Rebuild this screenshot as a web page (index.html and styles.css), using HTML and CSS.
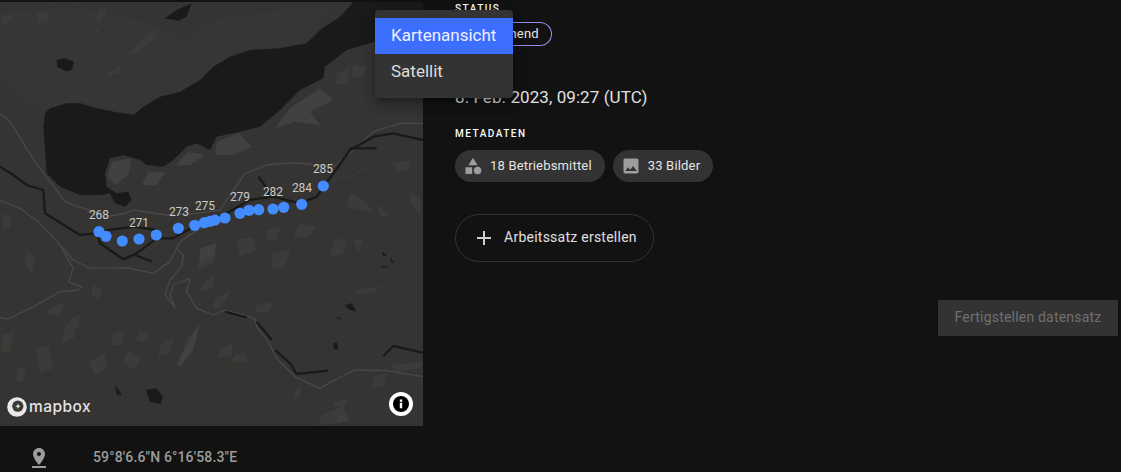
FILE: index.html
```html
<!DOCTYPE html>
<html lang="de">
<head>
<meta charset="utf-8">
<title>Datensatz</title>
<link rel="stylesheet" href="styles.css">
</head>
<body>
<div class="app">
  <section class="left">
    <div class="map">
      <svg class="map-svg" viewBox="0 6 1269 1272" width="423" height="424" xmlns="http://www.w3.org/2000/svg">
        <rect class="land" x="0" y="0" width="1269" height="1290"/>
        <path class="shade" d="M0 40L200 20L420 60L560 120L640 60L900 20L1000 20L920 130L700 160L560 270L400 345L240 305L130 330L60 300L0 230Z"/>
        <g class="patch">
          <path d="M285 70L300 25L320 30L305 60Z"/><path d="M110 40L150 35L140 65L115 70Z"/><path d="M470 90L430 110L385 165L410 160L465 115Z"/>
          <path d="M320 220L360 195L365 215L330 228Z"/><path d="M0 55L30 40L35 60L10 75Z"/>
          <path d="M280 90L300 85L295 100Z"/><path d="M1010 220L1050 205L1040 250L1005 255Z"/><path d="M1060 195L1100 200L1080 235L1055 230Z"/>
          <path d="M1180 490L1230 480L1225 510L1195 515Z"/>
          <path d="M1050 580L1090 600L1120 640L1080 630L1040 620Z"/><path d="M1130 610L1170 650L1140 650Z"/>
          <path d="M10 640L35 650L30 680L10 690Z"/><path d="M1225 570L1265 600L1260 640L1235 615Z"/><path d="M900 670L950 680L925 710L880 715Z"/>
          <path d="M1000 720L1040 715L1030 760L990 770Z"/><path d="M1060 720L1090 715L1075 760Z"/><path d="M710 720L760 710L770 750L720 770Z"/><path d="M800 690L840 680L830 720L800 720Z"/>
          <path d="M600 770L650 750L640 790L590 810Z"/><path d="M815 760L870 750L855 800L815 810Z"/><path d="M1070 870L1145 858L1120 878L1065 883Z"/><path d="M770 915L825 905L805 935L765 940Z"/>
          <path d="M80 750L105 770L95 820L75 800Z"/><path d="M275 855L305 865L298 895L275 890Z"/><path d="M150 925L195 905L180 945L140 945Z"/>
          <path d="M195 975L225 965L222 1015L185 1030Z"/><path d="M420 995L450 1003L430 1028L408 1018Z"/><path d="M565 1010L600 975L575 1050L535 1085Z"/>
          <path d="M265 1085L315 1060L322 1105L285 1125Z"/><path d="M110 1045L145 1038L160 1105L118 1120Z"/><path d="M385 1050L425 1075L400 1110L368 1085Z"/>
          <path d="M55 1105L78 1098L68 1145L45 1145Z"/><path d="M705 1065L735 1058L745 1085L695 1085Z"/>
          <path d="M965 1245L1030 1215L1050 1265L955 1275Z"/><path d="M1005 1205L1035 1197L1045 1213L995 1222Z"/><path d="M645 895L695 870L660 925L638 928Z"/>
          <path d="M5 1005L45 995L28 1055L5 1055Z"/><path d="M1170 1095L1265 1085L1265 1105L1185 1115Z"/><path d="M610 850L645 825L638 865L595 878Z"/>
          <path d="M210 955L240 945L235 985L205 990Z"/><path d="M340 1000L375 990L365 1035L335 1035Z"/><path d="M480 1035L520 1010L510 1060L475 1070Z"/>
          <path d="M660 1045L700 1030L695 1065L655 1075Z"/><path d="M1120 1130L1160 1120L1150 1160L1115 1165Z"/><path d="M885 1170L905 1165L900 1195L880 1195Z"/>
        </g>
        <g class="patch-hi">
          <path d="M870 325L960 265L1000 300L930 335L960 375L885 365L825 385Z"/><path d="M650 425L715 400L755 440L700 465L645 465Z"/>
          <path d="M335 485L395 475L385 525L345 555L322 530Z"/><path d="M445 515L495 515L470 555L425 555Z"/><path d="M565 455L615 465L570 495L525 497Z"/>
          <path d="M600 745L650 730L640 770L600 790Z"/><path d="M530 1090L600 970L580 1050L540 1100Z"/><path d="M1020 1240L1040 1260L1010 1270Z"/>
        </g>
        <path class="water" d="M1060 6L1020 50L960 90L920 130L840 145L750 150L690 170L640 200L600 240L540 275L480 290L430 320L400 345L340 335L290 325L240 310L200 310L150 325L135 340L130 380L135 450L140 520L180 560L240 585L300 585L330 580L345 610L375 620L395 600L385 575L350 580L320 560L315 520L330 475L370 465L420 480L440 495L490 500L520 480L560 440L590 430L630 450L650 410L720 395L780 380L840 330L900 270L970 235L975 200L1040 150L1125 125L1269 130L1269 6Z"/>
        <path class="water" d="M495 55L530 30L575 10L560 50L535 62Z"/>
        <path class="water" d="M170 180L195 175L222 185L215 210L200 214L172 202Z"/>
        <path class="water" d="M1035 915L1055 910L1068 935L1045 928Z"/>
        <path class="water" d="M1000 1030L1012 1028L1015 1048L1002 1048Z"/>
        <path class="water" d="M1008 950L1028 958L1015 957Z"/>
        <path class="water" d="M345 1155L360 1175L365 1186L350 1186Z"/>
        <path class="water" d="M438 1170L470 1165L488 1190L482 1212L450 1205Z"/>
        <path class="water" d="M1145 755L1160 765L1150 770ZM1172 775L1185 790L1172 785ZM1146 797L1168 800L1148 803Z"/>
        <g class="roads">
          <path d="M0 340L30 365L65 420L75 440L130 520L170 570L195 605L250 625L330 648L375 640L400 630L500 645L590 640L660 630L700 570L735 520L800 495L880 488L950 495L1000 500L1060 450L1120 395L1200 370L1269 370"/>
          <path d="M0 600L60 625L120 670L180 735L220 805L205 845L245 860L235 870L180 875L100 920L25 957L0 953"/>
          <path d="M180 735L220 780L270 805L380 803L460 820L510 785L540 725L600 685L690 660"/>
          <path d="M530 745L550 765L545 800L510 840L495 885L525 922L510 885L520 855L570 835L560 875L590 925L640 945L675 930L765 955L770 980L805 1025L830 1075L885 1130L960 1165L985 1150L1065 1110L1160 1112L1269 1130"/>
          <path class="thin" d="M1000 540L1060 525L1105 500"/>
        </g>
        <g class="rivers">
          <path d="M0 500L40 525L80 555L130 570L135 640L200 680L240 705L290 700L300 730L370 778L410 760L470 715L520 715L590 675L680 640L750 600L820 590L900 610L950 590L1000 520L1050 450L1120 410L1180 400L1269 420"/>
          <path d="M405 765L455 785"/><path d="M290 695L400 680L470 690"/><path d="M1050 445L1130 445"/><path d="M775 530L805 570L810 590"/>
          <path d="M675 935L740 952"/><path d="M770 965L815 1020"/><path d="M825 1050L870 1090L890 1122L985 1112"/><path d="M1150 1068L1180 1038L1269 1058"/>
        </g>
        <g transform="scale(3)">
          <g class="dots">
            <circle cx="99" cy="231.7" r="5.6"/><circle cx="106" cy="236.3" r="5.6"/><circle cx="122.3" cy="241" r="5.6"/><circle cx="139" cy="239" r="5.6"/>
            <circle cx="156.3" cy="235" r="5.6"/><circle cx="178.3" cy="228.3" r="5.6"/><circle cx="194.7" cy="225.3" r="5.6"/><circle cx="204.3" cy="222.7" r="5.6"/>
            <circle cx="210" cy="221.3" r="5.6"/><circle cx="215" cy="220" r="5.6"/><circle cx="225" cy="218" r="5.6"/><circle cx="240" cy="213.3" r="5.6"/>
            <circle cx="249" cy="210.3" r="5.6"/><circle cx="258.7" cy="209.7" r="5.6"/><circle cx="273" cy="209" r="5.6"/><circle cx="283.7" cy="207.3" r="5.6"/>
            <circle cx="301.7" cy="204.3" r="5.6"/><circle cx="323.3" cy="186" r="5.6"/>
          </g>
          <g class="labels">
            <text x="99" y="219">268</text><text x="139" y="227">271</text><text x="179" y="216">273</text><text x="205" y="210">275</text>
            <text x="240" y="201">279</text><text x="273" y="196">282</text><text x="302" y="192">284</text><text x="323" y="173">285</text>
          </g>
        </g>
      </svg>
      <div class="mapbox">
        <svg class="mapbox-mark" viewBox="0 0 20 20" width="20" height="20"><circle cx="10" cy="10" r="9.8" fill="#e8e8e8"/><circle cx="10.8" cy="9.2" r="5.6" fill="#3a3938"/><path d="M11 6.6l.8 1.9 1.9.8-1.9.8-.8 1.9-.8-1.9-1.9-.8 1.9-.8z" fill="#e8e8e8"/></svg>
        <span class="mapbox-word">mapbox</span>
      </div>
      <button class="info" type="button" aria-label="Info">
        <svg viewBox="0 0 24 24" width="24" height="24"><circle cx="12" cy="12" r="12" fill="#fff"/><circle cx="12" cy="12" r="8" fill="#000"/><path d="M10.8 10.8h2.4v5.4h-2.4zM10.8 7.6h2.4v2.2h-2.4z" fill="#fff"/></svg>
      </button>
    </div>
    <div class="coords">
      <svg class="pin" viewBox="0 0 24 24" width="24" height="24"><path d="M18 8c0-3.31-2.69-6-6-6S6 4.69 6 8c0 4.5 6 11 6 11s6-6.5 6-11zm-8 0c0-1.1.9-2 2-2s2 .9 2 2-.89 2-2 2c-1.1 0-2-.9-2-2zM5 20v2h14v-2H5z"/></svg>
      <span class="coords-text">59°8'6.6"N 6°16'58.3"E</span>
    </div>
  </section>

  <section class="right">
    <h3 class="label">STATUS</h3>
    <div class="status-wrap"><span class="status">Ausstehend</span></div>
    <p class="date">8. Feb. 2023, 09:27 (UTC)</p>
    <h3 class="label label-meta">METADATEN</h3>
    <div class="chips">
      <span class="chip">
        <svg class="chip-icon" viewBox="0 0 24 24" width="20" height="20"><path d="M12 2l-5.5 9h11z"/><circle cx="17.5" cy="17.5" r="4.5"/><path d="M3 13.5h8v8H3z"/></svg>
        18 Betriebsmittel
      </span>
      <span class="chip">
        <svg class="chip-icon" viewBox="0 0 24 24" width="20" height="20"><path d="M21 19V5c0-1.1-.9-2-2-2H5c-1.1 0-2 .9-2 2v14c0 1.1.9 2 2 2h14c1.1 0 2-.9 2-2zM8.5 13.5l2.5 3.01L14.5 12l4.5 6H5l3.5-4.5z"/></svg>
        33 Bilder
      </span>
    </div>
    <button class="add" type="button">
      <svg class="add-icon" viewBox="0 0 24 24" width="24" height="24"><path d="M19 13h-6v6h-2v-6H5v-2h6V5h2v6h6v2z"/></svg>
      <span class="add-text">Arbeitssatz erstellen</span>
    </button>
    <button class="finish" type="button" disabled>Fertigstellen datensatz</button>
  </section>

  <ul class="menu">
    <li class="menu-item is-active">Kartenansicht</li>
    <li class="menu-item">Satellit</li>
  </ul>
</div>
</body>
</html>
```
FILE: styles.css
```css
* { box-sizing: border-box; }
html, body { margin: 0; height: 100%; overflow: hidden; background: #121212; }
body { font-family: Roboto, "Liberation Sans", sans-serif; color: #e0e0e0; }

.app { position: relative; display: flex; width: 1121px; height: 472px; overflow: hidden; }

.left { width: 423px; flex: none; padding-top: 2px; }
.map { position: relative; width: 423px; height: 424px; overflow: hidden; }
.map-svg { display: block; }
.land { fill: #353433; }
.shade { fill: #373635; }
.patch path { fill: #3c3b39; }
.patch-hi path { fill: #42413f; }
.water { fill: #1a1a19; }
.roads path { fill: none; stroke: #484847; stroke-width: 4; stroke-linejoin: round; }
.roads .thin { stroke: #424140; stroke-width: 2; }
.rivers path { fill: none; stroke: #1a1a19; stroke-width: 7; stroke-linejoin: round; }
.dots circle { fill: #428cff; }
.labels text { fill: #c9c9c9; font-family: Roboto, sans-serif; font-size: 12px; text-anchor: middle; }

.mapbox { position: absolute; left: 7px; bottom: 9px; display: flex; align-items: center; gap: 2px; }
.mapbox-mark { display: block; }
.mapbox-word { font-family: Inter, sans-serif; font-weight: 500; font-size: 15.5px; line-height: 20px; color: #e4e4e4; letter-spacing: .45px; }
.info { position: absolute; right: 10px; bottom: 10px; width: 24px; height: 24px; padding: 0; border: 0; background: none; }
.info svg { display: block; }

.coords { display: flex; align-items: center; height: 48px; padding: 16px 0 0 27px; color: #9c9c9c; }
.pin { fill: #9c9c9c; flex: none; }
.coords-text { margin: -2px 0 0 42px; font-size: 14px; font-weight: 500; letter-spacing: .15px; }

.right { flex: 1; display: flex; flex-direction: column; align-items: flex-start; padding: 3px 3px 0 32px; }
.label { margin: 0; font-size: 10px; line-height: 11px; font-weight: 500; letter-spacing: 1.5px; color: #fafafa; }
.status-wrap { margin-top: 8px; }
.status { display: inline-flex; align-items: center; height: 23.5px; padding: 0 12.5px; font-size: 13px; border-radius: 12px; color: #e6e6e6; letter-spacing: .15px; border: 1px solid transparent; background: linear-gradient(#121212, #121212) padding-box, linear-gradient(90deg, #4a7dff, #b388eb) border-box; }
.date { margin: 42px 0 0; font-size: 17px; line-height: 19px; color: #e0e0e0; letter-spacing: .08px; }
.label-meta { margin-top: 21px; }
.chips { display: flex; gap: 8px; margin-top: 11px; }
.chip { display: inline-flex; align-items: center; height: 32px; padding: 0 13px 0 8px; border-radius: 16px; background: #333; font-size: 13px; color: #e4e4e4; letter-spacing: .18px; }
.chip-icon { fill: #9e9e9e; margin-right: 7px; flex: none; }
.add { display: inline-flex; align-items: center; margin-top: 32px; height: 48px; padding: 0 16px; border: 1px solid #333; border-radius: 24px; background: transparent; color: #e0e0e0; font: 400 14px Roboto, sans-serif; letter-spacing: .25px; }
.add-icon { fill: #cfcfcf; margin-right: 8px; flex: none; }
.add-text { margin-top: -1px; }
.finish { align-self: flex-end; margin-top: 38px; width: 180px; height: 36px; padding: 0 0 1px; border: 0; background: #333; color: #707070; font: 400 14px Roboto, sans-serif; letter-spacing: .2px; }

.menu { position: absolute; left: 375px; top: 10px; width: 138px; margin: 0; padding: 8px 0; list-style: none; background: #333; border-radius: 4px; box-shadow: 0 5px 5px -3px rgba(0,0,0,.2), 0 8px 10px 1px rgba(0,0,0,.14), 0 3px 14px 2px rgba(0,0,0,.12); }
.menu-item { height: 36px; padding: 0 16px; font-size: 17px; line-height: 35px; color: #dcdcdc; }
.is-active { background: #3d6fff; color: #eef; }
```
